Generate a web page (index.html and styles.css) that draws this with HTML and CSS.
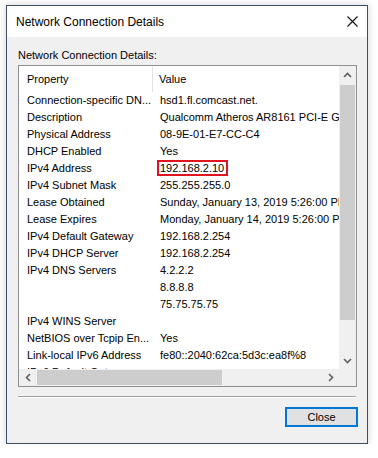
FILE: index.html
```html
<!DOCTYPE html>
<html>
<head>
<meta charset="utf-8">
<title>Network Connection Details</title>
<link rel="stylesheet" href="styles.css">
</head>
<body>
<div class="dialog">
  <div class="titlebar">
    <span class="title">Network Connection Details</span>
    <svg class="close-x" width="11" height="11" viewBox="0 0 11 11"><path d="M0.5 0.5 L10.5 10.5 M10.5 0.5 L0.5 10.5" stroke="#111" stroke-width="1.1" fill="none"/></svg>
  </div>
  <div class="body">
    <div class="label">Network Connection Details:</div>
    <div class="listbox">
      <div class="content">
        <div class="header">
          <div class="prop hcell">Property</div>
          <div class="val">Value</div>
        </div>
        <div class="row"><div class="prop">Connection-specific DN...</div><div class="val">hsd1.fl.comcast.net.</div></div>
        <div class="row"><div class="prop">Description</div><div class="val">Qualcomm Atheros AR8161 PCI-E Gigabit Ethernet Controller (NDIS 6.30)</div></div>
        <div class="row"><div class="prop">Physical Address</div><div class="val">08-9E-01-E7-CC-C4</div></div>
        <div class="row"><div class="prop">DHCP Enabled</div><div class="val">Yes</div></div>
        <div class="row"><div class="prop">IPv4 Address</div><div class="val"><span class="mark">192.168.2.10</span></div></div>
        <div class="row"><div class="prop">IPv4 Subnet Mask</div><div class="val">255.255.255.0</div></div>
        <div class="row"><div class="prop">Lease Obtained</div><div class="val">Sunday, January 13, 2019 5:26:00 PM</div></div>
        <div class="row"><div class="prop">Lease Expires</div><div class="val">Monday, January 14, 2019 5:26:00 PM</div></div>
        <div class="row"><div class="prop">IPv4 Default Gateway</div><div class="val">192.168.2.254</div></div>
        <div class="row"><div class="prop">IPv4 DHCP Server</div><div class="val">192.168.2.254</div></div>
        <div class="row"><div class="prop">IPv4 DNS Servers</div><div class="val">4.2.2.2</div></div>
        <div class="row"><div class="prop"></div><div class="val">8.8.8.8</div></div>
        <div class="row"><div class="prop"></div><div class="val">75.75.75.75</div></div>
        <div class="row"><div class="prop">IPv4 WINS Server</div><div class="val"></div></div>
        <div class="row"><div class="prop">NetBIOS over Tcpip En...</div><div class="val">Yes</div></div>
        <div class="row"><div class="prop">Link-local IPv6 Address</div><div class="val">fe80::2040:62ca:5d3c:ea8f%8</div></div>
        <div class="row"><div class="prop">IPv6 Default Gateway</div><div class="val"></div></div>
      </div>
      <div class="vscroll">
        <div class="sbtn">
          <svg width="9" height="6" viewBox="0 0 9 6"><polyline points="1,5 4.5,1.5 8,5" stroke="#606060" stroke-width="1.6" fill="none"/></svg>
        </div>
        <div class="vtrack"><div class="vthumb"></div></div>
        <div class="sbtn">
          <svg width="9" height="6" viewBox="0 0 9 6"><polyline points="1,1 4.5,4.5 8,1" stroke="#606060" stroke-width="1.6" fill="none"/></svg>
        </div>
      </div>
      <div class="hscroll">
        <div class="sbtn">
          <svg width="6" height="9" viewBox="0 0 6 9"><polyline points="5,1 1.5,4.5 5,8" stroke="#606060" stroke-width="1.6" fill="none"/></svg>
        </div>
        <div class="htrack"><div class="hthumb"></div></div>
        <div class="sbtn">
          <svg width="6" height="9" viewBox="0 0 6 9"><polyline points="1,1 4.5,4.5 1,8" stroke="#606060" stroke-width="1.6" fill="none"/></svg>
        </div>
      </div>
      <div class="corner"></div>
    </div>
    <div class="separator"></div>
    <div class="buttons">
      <button class="btn">Close</button>
    </div>
  </div>
</div>
</body>
</html>
```
FILE: styles.css
```css
html, body {
  margin: 0;
  padding: 0;
  background: #ffffff;
}
body {
  font-family: "Liberation Sans", Arial, sans-serif;
  color: #000;
}
.dialog {
  box-sizing: border-box;
  width: 362px;
  height: 439px;
  margin: 5px 0 0 6px;
  border: 1px solid #3a4f66;
  box-shadow: 0 0 7px 1px rgba(0, 0, 0, 0.14);
  display: flex;
  flex-direction: column;
  background: #f0f0f0;
}
.titlebar {
  height: 31px;
  flex: none;
  background: #ffffff;
  display: flex;
  align-items: center;
  justify-content: space-between;
  padding: 0 9px 0 9px;
}
.title {
  font-size: 12px;
  line-height: 14px;
}
.close-x {
  display: block;
  margin-top: -1px;
}
.body {
  flex: 1;
  display: flex;
  flex-direction: column;
  padding: 11px 10px 16px 11px;
}
.label {
  font-size: 11px;
  line-height: 14px;
  margin-bottom: 3px;
}
.listbox {
  box-sizing: border-box;
  width: 339px;
  height: 322px;
  border: 1px solid #8e9093;
  background: #ffffff;
  display: grid;
  grid-template-columns: 320px 17px;
  grid-template-rows: 303px 17px;
  overflow: hidden;
}
.content {
  overflow: hidden;
  font-size: 11px;
}
.header {
  display: flex;
  height: 26px;
  align-items: stretch;
}
.header .prop, .header .val {
  display: flex;
  align-items: center;
  line-height: 13px;
  padding-top: 0;
}
.header .hcell {
  border-right: 1px solid #e3e3e3;
}
.row {
  display: flex;
  height: 17px;
  line-height: 17px;
}
.prop {
  box-sizing: border-box;
  width: 134px;
  flex: none;
  padding-left: 8px;
  white-space: nowrap;
  overflow: hidden;
}
.row .prop {
  width: 135px;
}
.val {
  padding-left: 6px;
  white-space: nowrap;
}
.mark {
  display: inline-block;
  border: 2px solid #e0141e;
  line-height: 12px;
  padding: 0 2px 0 1px;
  margin-left: -3px;
  vertical-align: top;
  margin-top: 0px;
}
.vscroll {
  background: #f0f0f0;
  display: flex;
  flex-direction: column;
}
.vscroll .sbtn {
  height: 17px;
  flex: none;
  display: flex;
  align-items: center;
  justify-content: center;
}
.vtrack {
  flex: 1;
  padding: 2px 1px 32px 1px;
  display: flex;
}
.vthumb {
  flex: 1;
  background: #cdcdcd;
}
.hscroll {
  background: #f0f0f0;
  display: flex;
}
.hscroll .sbtn {
  width: 17px;
  flex: none;
  display: flex;
  align-items: center;
  justify-content: center;
}
.htrack {
  flex: 1;
  padding: 1px 100px 1px 1px;
  display: flex;
}
.hthumb {
  flex: 1;
  background: #cdcdcd;
}
.corner {
  background: #f0f0f0;
}
.separator {
  width: 338px;
  height: 0;
  border-top: 1px solid #a0a0a0;
  border-bottom: 1px solid #ffffff;
  margin-top: 9px;
}
.buttons {
  display: flex;
  justify-content: flex-end;
  margin-top: 9px;
  padding-right: 0;
}
.btn {
  box-sizing: border-box;
  width: 73px;
  height: 20px;
  margin: 0 -1px 0 0;
  padding: 0;
  border: 2px solid #0078d7;
  background: #e1e1e1;
  font-family: "Liberation Sans", Arial, sans-serif;
  font-size: 11px;
  color: #000;
}
```
